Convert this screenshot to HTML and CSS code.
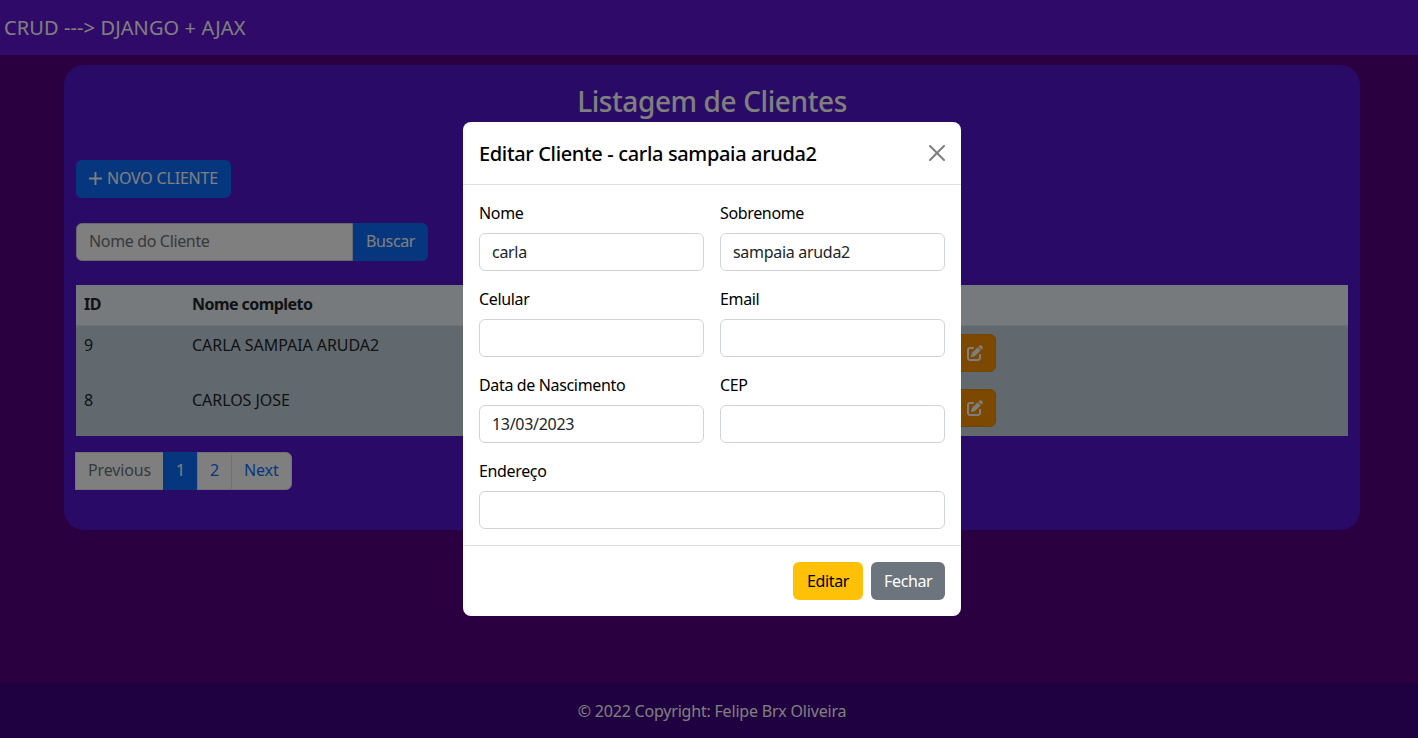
FILE: index.html
```html
<!DOCTYPE html>
<html lang="pt-br">
<head>
    <meta charset="utf-8">
    <title>CRUD Django + Ajax</title>
    <link rel="stylesheet" href="styles.css">
</head>
<body>
<nav class="navbar">
    <span class="brand">CRUD ---&gt; DJANGO + AJAX</span>
</nav>

<main class="content">
    <section class="card">
        <h2 class="card-title">Listagem de Clientes</h2>

        <button class="btn btn-primary btn-novo" type="button">
            <svg class="icon-plus" viewBox="0 0 14 14"><path d="M7 0v14M0 7h14"/></svg>
            <span>NOVO CLIENTE</span>
        </button>

        <form class="search">
            <input class="search-input" type="text" placeholder="Nome do Cliente">
            <button class="btn btn-primary search-btn" type="button">Buscar</button>
        </form>

        <table class="clients">
            <thead>
                <tr>
                    <th class="col-id">ID</th>
                    <th class="col-name">Nome completo</th>
                    <th class="col-actions"></th>
                </tr>
            </thead>
            <tbody>
                <tr>
                    <td>9</td>
                    <td>CARLA SAMPAIA ARUDA2</td>
                    <td class="cell-actions">
                        <button class="btn btn-edit" type="button">
                            <svg class="icon-edit" viewBox="0 0 512 512"><path d="M471.6 21.7c-21.9-21.9-57.3-21.9-79.2 0L362.3 51.7l97.9 97.9 30.1-30.1c21.9-21.9 21.9-57.3 0-79.2L471.6 21.7zm-299.2 220c-6.1 6.1-10.8 13.6-13.5 21.9l-29.6 88.8c-2.9 8.6-.6 18.1 5.8 24.6s15.9 8.7 24.6 5.8l88.8-29.6c8.2-2.7 15.7-7.4 21.9-13.5L437.7 172.3 339.7 74.3 172.4 241.7zM96 64C43 64 0 107 0 160V416c0 53 43 96 96 96H352c53 0 96-43 96-96V320c0-17.7-14.3-32-32-32s-32 14.3-32 32v96c0 17.7-14.3 32-32 32H96c-17.7 0-32-14.3-32-32V160c0-17.7 14.3-32 32-32h96c17.7 0 32-14.3 32-32s-14.3-32-32-32H96z"/></svg>
                        </button>
                    </td>
                </tr>
                <tr>
                    <td>8</td>
                    <td>CARLOS JOSE</td>
                    <td class="cell-actions">
                        <button class="btn btn-edit" type="button">
                            <svg class="icon-edit" viewBox="0 0 512 512"><path d="M471.6 21.7c-21.9-21.9-57.3-21.9-79.2 0L362.3 51.7l97.9 97.9 30.1-30.1c21.9-21.9 21.9-57.3 0-79.2L471.6 21.7zm-299.2 220c-6.1 6.1-10.8 13.6-13.5 21.9l-29.6 88.8c-2.9 8.6-.6 18.1 5.8 24.6s15.9 8.7 24.6 5.8l88.8-29.6c8.2-2.7 15.7-7.4 21.9-13.5L437.7 172.3 339.7 74.3 172.4 241.7zM96 64C43 64 0 107 0 160V416c0 53 43 96 96 96H352c53 0 96-43 96-96V320c0-17.7-14.3-32-32-32s-32 14.3-32 32v96c0 17.7-14.3 32-32 32H96c-17.7 0-32-14.3-32-32V160c0-17.7 14.3-32 32-32h96c17.7 0 32-14.3 32-32s-14.3-32-32-32H96z"/></svg>
                        </button>
                    </td>
                </tr>
            </tbody>
        </table>

        <ul class="pagination">
            <li class="page-item disabled">Previous</li>
            <li class="page-item active">1</li>
            <li class="page-item">2</li>
            <li class="page-item">Next</li>
        </ul>
    </section>
</main>

<footer class="footer">© 2022 Copyright: Felipe Brx Oliveira</footer>

<div class="backdrop"></div>

<div class="modal">
    <div class="modal-dialog">
        <div class="modal-header">
            <h5 class="modal-title">Editar Cliente - carla sampaia aruda2</h5>
            <svg class="btn-close" viewBox="0 0 16 16"><path d="M.293.293a1 1 0 011.414 0L8 6.586 14.293.293a1 1 0 111.414 1.414L9.414 8l6.293 6.293a1 1 0 01-1.414 1.414L8 9.414l-6.293 6.293a1 1 0 01-1.414-1.414L6.586 8 .293 1.707a1 1 0 010-1.414z"/></svg>
        </div>
        <form class="modal-body">
            <div class="field">
                <label>Nome</label>
                <input class="form-control" type="text" value="carla">
            </div>
            <div class="field">
                <label>Sobrenome</label>
                <input class="form-control" type="text" value="sampaia aruda2">
            </div>
            <div class="field">
                <label>Celular</label>
                <input class="form-control" type="text">
            </div>
            <div class="field">
                <label>Email</label>
                <input class="form-control" type="text">
            </div>
            <div class="field">
                <label>Data de Nascimento</label>
                <input class="form-control" type="text" value="13/03/2023">
            </div>
            <div class="field">
                <label>CEP</label>
                <input class="form-control" type="text">
            </div>
            <div class="field field-wide">
                <label>Endereço</label>
                <input class="form-control" type="text">
            </div>
        </form>
        <div class="modal-footer">
            <button class="btn btn-warning" type="button">Editar</button>
            <button class="btn btn-secondary" type="button">Fechar</button>
        </div>
    </div>
</div>
</body>
</html>
```

FILE: styles.css
```css
* {
    box-sizing: border-box;
}

html,
body {
    height: 100%;
}

body {
    margin: 0;
    display: flex;
    flex-direction: column;
    overflow: hidden;
    background: #540080;
    color: #212529;
    font-family: "Noto Sans", sans-serif;
    font-size: 16px;
    line-height: 24px;
    letter-spacing: -0.35px;
}

.navbar {
    height: 55px;
    padding-left: 4px;
    display: flex;
    align-items: center;
    background: #6014d0;
}

.brand {
    font-size: 20px;
    letter-spacing: 0.1px;
    color: #fff;
}

.content {
    flex: 1;
    padding: 10px 58px 0 64px;
}

.card {
    height: 465px;
    padding: 19px 12px 0;
    background: #5214cc;
    border-radius: 20px;
}

.card-title {
    margin: 0 0 42px;
    height: 34px;
    font-size: 28px;
    line-height: 34px;
    font-weight: 500;
    letter-spacing: -0.4px;
    text-align: center;
    color: #fff;
}

.btn {
    height: 38px;
    padding: 0 12px;
    border: 1px solid transparent;
    border-radius: 6px;
    font: inherit;
    letter-spacing: inherit;
    cursor: pointer;
}

.btn-primary {
    background: #0d6efd;
    color: #fff;
}

.btn-novo {
    width: 155px;
    padding-bottom: 2px;
    display: flex;
    align-items: center;
    gap: 5px;
    letter-spacing: -0.2px;
}

.icon-plus {
    width: 13px;
    height: 13px;
    fill: none;
    stroke: #fff;
    stroke-width: 2;
}

.search {
    width: 352px;
    margin: 25px 0 24px;
    display: flex;
}

.search-input {
    width: 277px;
    height: 38px;
    padding: 0 12px 2px;
    border: 1px solid #ced4da;
    border-radius: 6px 0 0 6px;
    background: #fff;
    font: inherit;
    letter-spacing: inherit;
}

.search-input::placeholder {
    color: #6c757d;
}

.search-btn {
    width: 75px;
    padding-bottom: 2px;
    border-radius: 0 6px 6px 0;
}

.clients {
    width: 1272px;
    border-collapse: separate;
    border-spacing: 0;
    table-layout: fixed;
    text-align: left;
}

.clients th,
.clients td {
    padding: 7px 8px 8px;
    vertical-align: top;
}

.clients th {
    height: 41px;
    background: #ecf4f8;
    border-bottom: 1px solid #dde5e8;
    letter-spacing: -0.55px;
}

.clients td {
    height: 55px;
    background: #c2d2dc;
    letter-spacing: -0.05px;
}

.clients .cell-actions {
    padding-top: 8px;
}

.col-id {
    width: 108px;
}

.col-name {
    width: 761px;
}

.btn-edit {
    width: 43px;
    display: flex;
    align-items: center;
    justify-content: center;
    padding: 0;
    background: #fb9000;
    border-color: #e08e00;
}

.icon-edit {
    width: 16px;
    height: 16px;
    fill: #fff;
}

.pagination {
    width: 217px;
    margin: 16px 0 0 -1px;
    padding: 0;
    display: flex;
    list-style: none;
    letter-spacing: -0.15px;
}

.page-item {
    height: 38px;
    padding: 5px 12px;
    background: #fff;
    border: 1px solid #dee2e6;
    margin-left: -1px;
    color: #0d6efd;
}

.page-item:first-child {
    margin-left: 0;
}

.page-item:last-child {
    border-radius: 0 6px 6px 0;
}

.page-item.disabled {
    color: #6c757d;
}

.page-item.active {
    background: #0d6efd;
    border-color: #0d6efd;
    color: #fff;
}

.footer {
    height: 55px;
    display: flex;
    align-items: center;
    justify-content: center;
    padding-left: 6px;
    background: #3e0080;
    letter-spacing: -0.2px;
    color: #fff;
}

.backdrop {
    position: fixed;
    inset: 0;
    background: rgba(0, 0, 0, 0.5);
}

.modal {
    position: fixed;
    top: 122px;
    left: 463px;
    width: 498px;
}

.modal-dialog {
    background: #fff;
    border-radius: 8px;
    color: #000;
}

.modal-header {
    height: 63px;
    padding: 1px 16px 0;
    display: flex;
    align-items: center;
    justify-content: space-between;
    border-bottom: 1px solid #dee2e6;
}

.modal-title {
    margin: 0;
    font-size: 20px;
    font-weight: 500;
}

.btn-close {
    width: 16px;
    height: 16px;
    margin-bottom: 1px;
    opacity: 0.5;
}

.modal-body {
    padding: 16px;
    display: grid;
    grid-template-columns: 1fr 1fr;
    gap: 16px;
}

.field-wide {
    grid-column: 1 / 3;
}

.field label {
    display: block;
    margin-bottom: 8px;
}

.form-control {
    display: block;
    width: 100%;
    height: 38px;
    padding: 0 12px;
    border: 1px solid #ced4da;
    border-radius: 6px;
    background: #fff;
    color: #212529;
    font: inherit;
    letter-spacing: -0.3px;
}

.modal-footer {
    padding: 16px;
    display: flex;
    justify-content: flex-end;
    gap: 8px;
    border-top: 1px solid #dee2e6;
}

.btn-warning {
    width: 70px;
    background: #ffc107;
    color: #000;
}

.btn-secondary {
    width: 74px;
    background: #6c757d;
    color: #fff;
}
```
